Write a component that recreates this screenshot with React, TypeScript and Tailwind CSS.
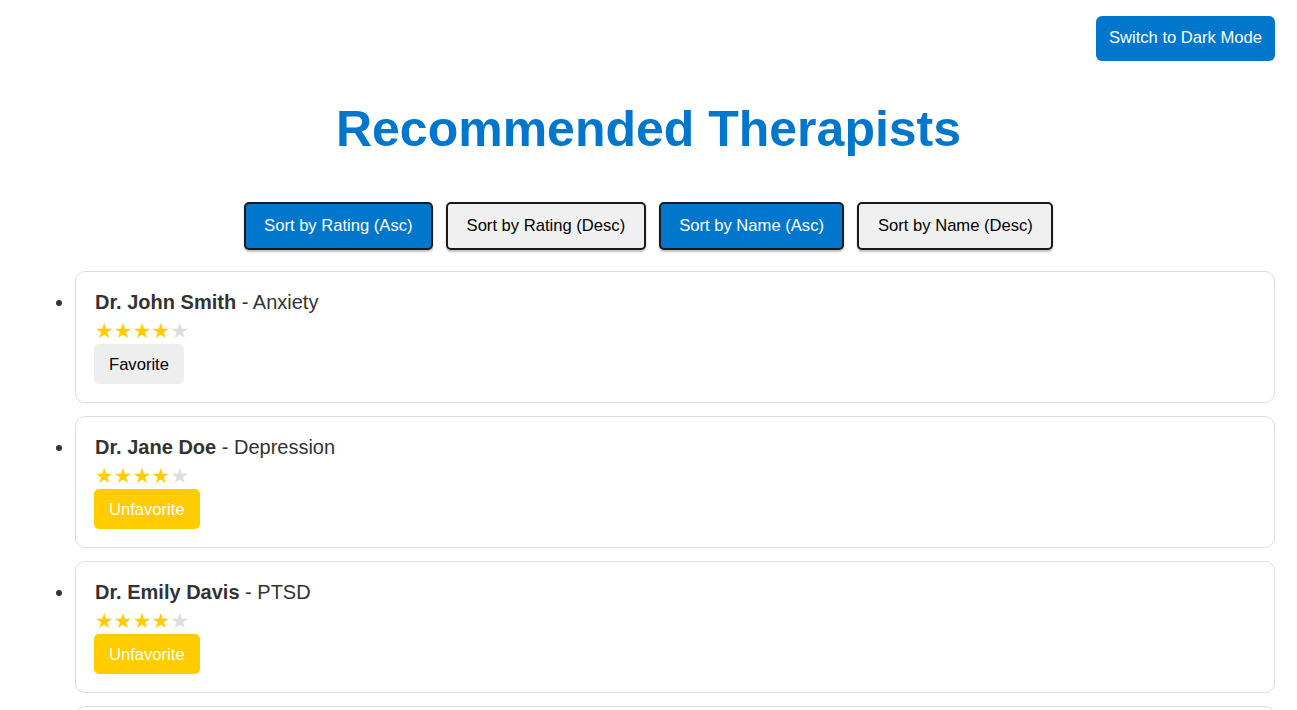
import React from "react";

type T = { name: string; spec: string; rating: number; fav: boolean };

const data: T[] = [
  { name: "Dr. John Smith", spec: "Anxiety", rating: 4, fav: false },
  { name: "Dr. Jane Doe", spec: "Depression", rating: 4, fav: true },
  { name: "Dr. Emily Davis", spec: "PTSD", rating: 4, fav: true },
  { name: "Dr. Michael Brown", spec: "Stress", rating: 4, fav: false },
];

function SortBtn({ label, active }: { label: string; active: boolean }) {
  return (
    <button
      className={
        active
          ? "h-[48px] px-[18.5px] rounded-[5px] border-2 border-[#1a1a1a] bg-[#0077cc] text-white text-[16.6px] shadow-[0_2px_2px_rgba(0,0,0,0.25)]"
          : "h-[48px] px-[18.5px] rounded-[5px] border-2 border-[#1a1a1a] bg-[#f0f0f0] text-black text-[16.6px] shadow-[0_2px_2px_rgba(0,0,0,0.25)]"
      }
    >
      {label}
    </button>
  );
}

export default function App() {
  return (
    <div
      className="h-[710px] overflow-hidden bg-white px-[22px] pt-[16px]"
      style={{ fontFamily: '"Liberation Sans", Arial, sans-serif' }}
    >
      <div className="flex justify-end">
        <button className="h-[45px] px-[13px] rounded-[6px] bg-[#0077cc] text-white text-[16.6px]">
          Switch to Dark Mode
        </button>
      </div>
      <h1 className="mt-[39px] text-center text-[50px] font-bold leading-[58px] text-[#0077cc]">
        Recommended Therapists
      </h1>
      <div className="mt-[44px] flex justify-center gap-[13px]">
        <SortBtn label="Sort by Rating (Asc)" active={true} />
        <SortBtn label="Sort by Rating (Desc)" active={false} />
        <SortBtn label="Sort by Name (Asc)" active={true} />
        <SortBtn label="Sort by Name (Desc)" active={false} />
      </div>
      <ul className="mt-[21px] list-disc pl-[53px] text-[#333]">
        {data.map((t) => (
          <li
            key={t.name}
            className="mb-[13px] rounded-[10px] border border-[#dddddd] px-[19px] pt-[19px] pb-[18px] text-[20px] leading-[23px] marker:text-[#333]"
          >
            <div>
              <span className="font-bold">{t.name}</span> - {t.spec}
            </div>
            <div className="mt-[5px] flex h-[24px] items-center text-[21px] leading-[24px]" style={{ fontFamily: '"DejaVu Sans", sans-serif' }}>
              {[1, 2, 3, 4, 5].map((i) => (
                <span key={i} className={i <= t.rating ? "text-[#ffcc00]" : "text-[#dddddd]"}>
                  ★
                </span>
              ))}
            </div>
            <button
              className={
                t.fav
                  ? "-ml-px mt-[1px] h-[40px] px-[15px] rounded-[5px] bg-[#ffcc00] text-white text-[16.6px]"
                  : "-ml-px mt-[1px] h-[40px] px-[15px] rounded-[5px] bg-[#eeeeee] text-black text-[16.6px]"
              }
            >
              {t.fav ? "Unfavorite" : "Favorite"}
            </button>
          </li>
        ))}
      </ul>
    </div>
  );
}
